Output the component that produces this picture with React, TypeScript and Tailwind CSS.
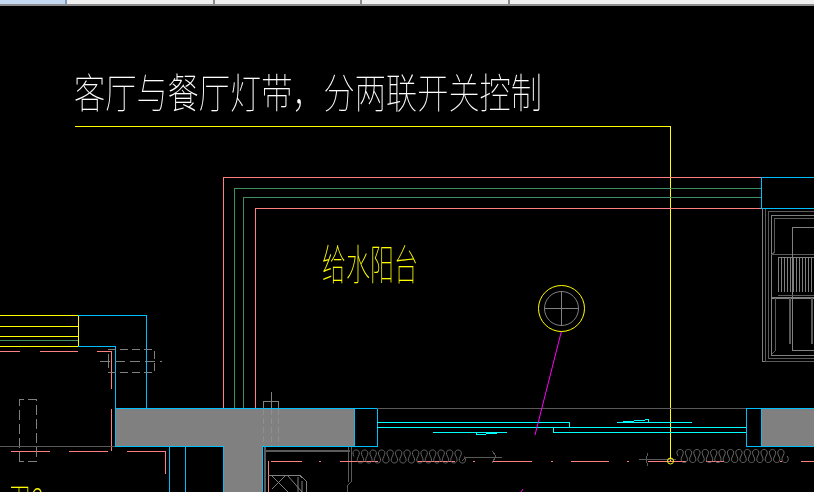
import React from "react";

const CYAN = "#00bfff";
const AQUA = "#00ffff";
const PINK = "#ff8080";
const GREEN = "#3f8f5f";
const GRAY = "#808080";
const DARK = "#5a5a5a";
const YEL = "#ffff00";

function coil(x0: number, yc: number, turns: number, p: number) {
  const half = p / 2;
  let d = `M${x0} ${yc}`;
  const n = turns * 2;
  for (let i = 0; i < n; i++) {
    const a = x0 + i * half;
    const b = a + half;
    const h = i % 2 === 0 ? -8.7 : 8.7;
    d += `C${(a - 5).toFixed(1)} ${yc + h} ${(b + 5).toFixed(1)} ${yc + h} ${b.toFixed(1)} ${yc}`;
  }
  return d;
}

const L = ({ d, c, w = 1, dash }: { d: string; c: string; w?: number; dash?: string }) => (
  <path d={d} fill="none" stroke={c} strokeWidth={w} strokeDasharray={dash} />
);

const hatch = Array.from({ length: 13 }, (_, i) => 778.5 + i * 3);

export default function App() {
  return (
    <div className="flex h-[492px] w-[814px] flex-col overflow-hidden bg-black">
      <div className="flex h-[6px] shrink-0 border-b-2 border-[#8c8c8c] bg-[#f0f0f0]">
        <div className="w-[67px] border-r-2 border-[#7f9db9] bg-[#c4d9f1]" />
        <div className="w-[147.5px] border-r-2 border-[#8c8c8c]" />
        <div className="w-[147.5px] border-r-2 border-[#8c8c8c]" />
        <div className="w-[147.5px] border-r-2 border-[#8c8c8c]" />
      </div>
      <svg viewBox="0 6 814 486" className="block h-[486px] w-[814px]" shapeRendering="crispEdges">
        {/* title */}
        <text className="[filter:contrast(1.01)]" x="74" y="108" fill="#ffffff" fontSize="41" fontFamily="'Noto Sans CJK SC', sans-serif" fontWeight="100" textLength="468" lengthAdjust="spacingAndGlyphs" shapeRendering="auto">客厅与餐厅灯带，分两联开关控制</text>
        <L d="M75 126.5H670.5V461" c={YEL} />
        <text className="[filter:contrast(1.01)]" x="322" y="280" fill={YEL} fontSize="42" fontFamily="'Noto Sans CJK SC', sans-serif" fontWeight="100" textLength="96" lengthAdjust="spacingAndGlyphs" shapeRendering="auto">给水阳台</text>
        <text className="[filter:contrast(1.01)]" x="8" y="519" fill={YEL} fontSize="42" fontFamily="'Noto Sans CJK SC', sans-serif" fontWeight="100" textLength="36" lengthAdjust="spacingAndGlyphs" shapeRendering="auto">卫2</text>

        {/* nested room outlines */}
        <L d="M223.5 408V177.5H761" c={PINK} />
        <L d="M234.5 408V188.5H761" c={GREEN} />
        <L d="M243.5 408V197.5H761" c={GREEN} />
        <L d="M255.5 408V208.5H761" c={PINK} />
        <L d="M761.5 177.5H814M761.5 177V208.5H814" c={CYAN} />

        {/* window */}
        <L d="M762.5 209V361.5H814" c={GRAY} />
        <L d="M765.5 209V361H814" c={DARK} />
        <L d="M814 211.5H768.5V358.5H814" c={DARK} />
        <L d="M814 215.5H771.5V355H814" c={GRAY} />
        <L d="M814 218.5H774.5V252L772 254.5H814" c={DARK} />
        <L d="M814 257.5H778" c={GRAY} />
        <L d="M814 227.5H792.5V350.5H814" c={GRAY} />
        {hatch.map((x) => (
          <L key={x} d={`M${x} 258V292`} c={GRAY} />
        ))}
        <L d="M778 295.5H814" c={DARK} />
        <L d="M771 297.5H814" c={GRAY} w={2} />
        <L d="M790 298V344M812 298V344" c={DARK} w={2} />
        <L d="M775 298V351L772 354" c={DARK} />

        {/* left room */}
        <L d="M0 315.5H78.5V346.5H0M0 326.5H78M0 336.5H78" c={YEL} />
        <L d="M0 340.5H78" c={GREEN} />
        <L d="M78 315.5H146.5V408M78 346.5H115.5V408" c={CYAN} />
        <L d="M0 351.5H20M40 351.5H78M97 351.5H111.5V389M111.5 409V451" c={PINK} />
        <L d="M11 451.5H50M69 451.5H108M127 451.5H165.5V474" c={PINK} />
        <L d="M108.5 362V349.5H154.5V372.5H108.5V362" c={GRAY} dash="8 4" />
        <L d="M100 361.5H162" c={GRAY} dash="10 5" />
        <L d="M19.5 461.5V399.5H36.5V461.5H19.5" c={GRAY} dash="10 4" />
        <L d="M0 446.5H115" c={DARK} />

        {/* concrete wall */}
        <path d="M115.5 408.5H354.5V446.5H262.5V492H223.5V446.5H115.5Z" fill="#808080" stroke={CYAN} strokeWidth="1" />
        <path d="M761.5 408.5H814V446.5H761.5Z" fill="#808080" stroke={CYAN} strokeWidth="1" />
        <L d="M354.5 408.5H377.5V446.5H354.5M746.5 446.5V408.5H761.5M746.5 446.5H761.5" c={CYAN} />
        <L d="M169.5 446V492M185.5 446V492" c={CYAN} />
        <L d="M377 408.5H746" c={DARK} />
        <L d="M271.5 392V408M263.5 409V401.5H278.5V408" c={GRAY} />
        <L d="M271.5 409V446M278.5 409V446M263.5 409V446" c="#8f8f8f" dash="6 3" />

        {/* window glazing */}
        <L d="M377 422.5H569.5V427.5M377 427.5H746M553.5 427.5V432.5H746" c={AQUA} />
        <L d="M433 432.5H507" c={AQUA} />
        <L d="M476.5 433V434.5H486M486 433.5H497" c={AQUA} />
        <L d="M617 422.5H692M623 421.5H634M634 420.5H645M645 419.5H648V422" c={AQUA} />

        {/* lower-left corner of the bay */}
        <L d="M265 450.5H350" c={DARK} w={2} />
        <L d="M265 447V492" c={DARK} w={2} />
        <L d="M348.5 447V482M351 447V482L347 486V492" c={DARK} />
        <L d="M271 461.5H302" c={PINK} />
        <L d="M268.5 461V492" c={PINK} />
        <L d="M268 475.5H300M300 475.5L306 481V492" c={GRAY} />
        <g shapeRendering="auto">
          <path d="M285 476L272 489M272 476L288 492M288 476L302 492M298 477V492M302 481V492" fill="none" stroke={GRAY} strokeWidth="1" />
        </g>

        {/* pink dashes on the floor line */}
        <L d="M278 461.5H302M319 461.5H321M340 461.5H378M417 461.5H455M473 461.5H475M493 461.5H532M551 461.5H553M571 461.5H609M627 461.5H629M648 461.5H686M706 461.5H724M780 461.5H782M801 461.5H814" c={PINK} />

        {/* coils */}
        <g shapeRendering="auto">
          <path d={coil(354, 456.5, 13, 8.5)} fill="none" stroke="#666666" strokeWidth="1" />
          <path d={coil(678, 456, 13, 8.4)} fill="none" stroke="#666666" strokeWidth="1" />
        </g>
        <L d="M462 461L466 457H502M492 451L496 456L492 463" c={DARK} />
        <L d="M639 459.5H676M648 453L646 459L648 466" c={DARK} />

        {/* magenta leader & symbol */}
        <g shapeRendering="auto">
          <path d="M561.5 331L535 435" stroke="#ff00ff" strokeWidth="1" fill="none" />
          <path d="M523 489L521 492" stroke="#ff00ff" strokeWidth="1" fill="none" />
          <circle cx="561.5" cy="308.5" r="23" fill="none" stroke={YEL} />
          <circle cx="561.5" cy="308.5" r="17" fill="none" stroke={GRAY} />
          <circle cx="670.5" cy="461" r="3" fill="none" stroke={YEL} />
        </g>
        <L d="M544 308.5H579M561.5 291V326" c={GRAY} />
      </svg>
    </div>
  );
}
